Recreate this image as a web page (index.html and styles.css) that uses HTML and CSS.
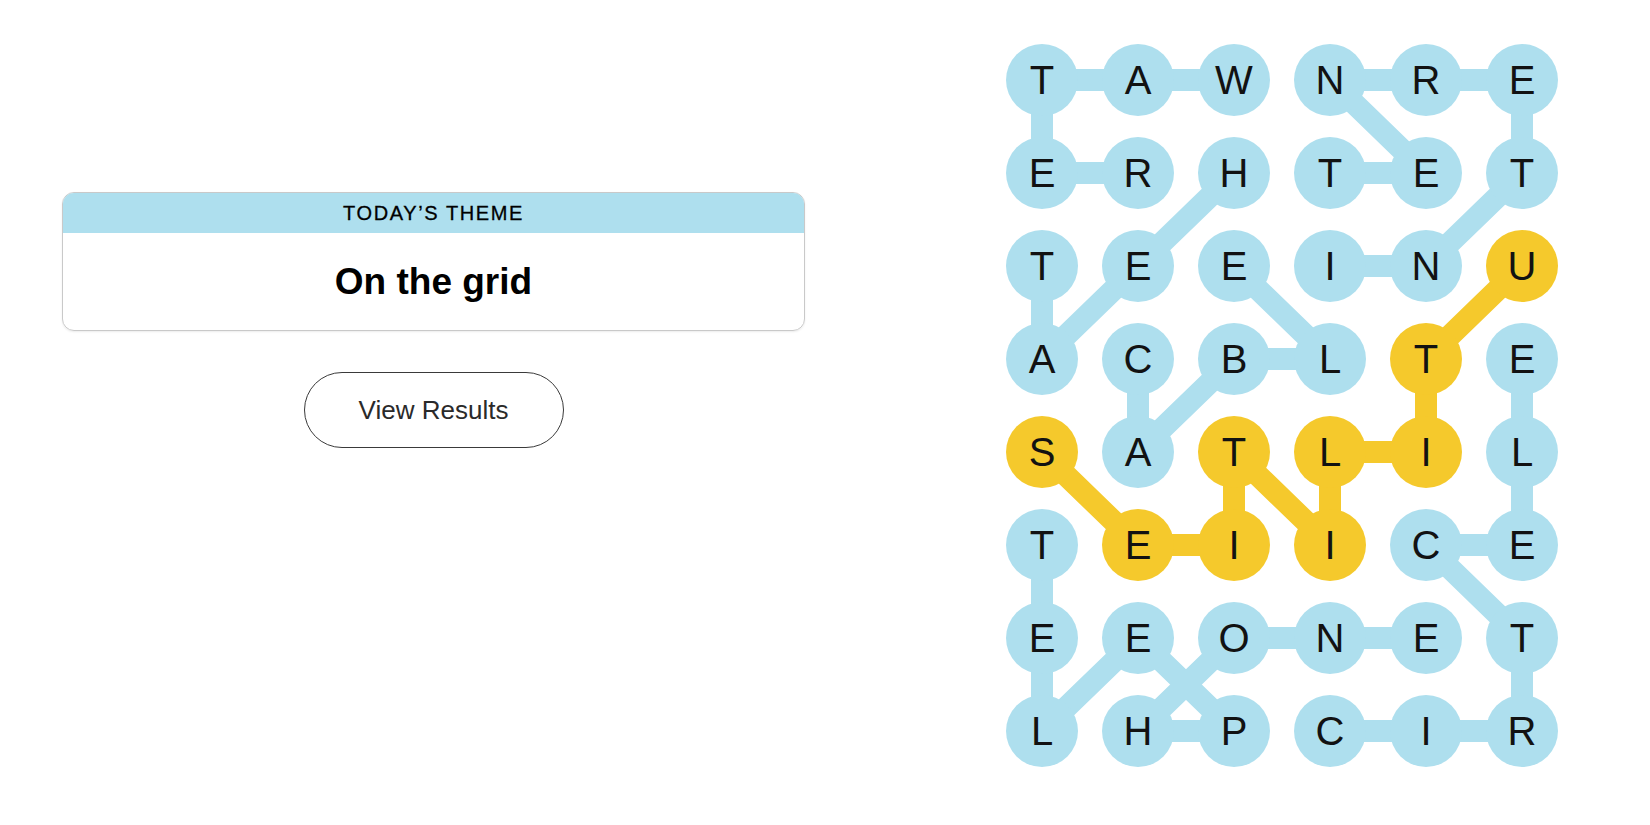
FILE: index.html
```html
<!DOCTYPE html>
<html lang="en">
<head>
<meta charset="utf-8">
<title>Strands</title>
<link rel="stylesheet" href="styles.css">
</head>
<body>
<main class="page">
  <section class="side">
    <div class="theme-card">
      <div class="theme-label">TODAY’S THEME</div>
      <div class="theme-body"><h1 class="theme-title">On the grid</h1></div>
    </div>
    <button class="results-btn" type="button">View Results</button>
  </section>

  <section class="board">
    <svg class="links" width="552" height="723" viewBox="0 0 552 723" aria-hidden="true">
      <g class="found" fill="none">
        <polyline points="228,36 132,36 36,36 36,129 132,129"/>
        <polyline points="228,129 132,222 36,315 36,222"/>
        <polyline points="324,222 420,222 516,129 516,36 420,36 324,36 420,129 324,129"/>
        <polyline points="132,315 132,408 228,315 324,315 228,222"/>
        <polyline points="516,315 516,408 516,501 420,501 516,594 516,687 420,687 324,687"/>
        <polyline points="36,501 36,594 36,687 132,594 228,687 132,687 228,594 324,594 420,594"/>
      </g>
      <g class="span" fill="none">
        <polyline points="516,222 420,315 420,408 324,408 324,501 228,408 228,501 132,501 36,408"/>
      </g>
    </svg>
    <div class="grid">
      <span class="cell">T</span><span class="cell">A</span><span class="cell">W</span><span class="cell">N</span><span class="cell">R</span><span class="cell">E</span>
      <span class="cell">E</span><span class="cell">R</span><span class="cell">H</span><span class="cell">T</span><span class="cell">E</span><span class="cell">T</span>
      <span class="cell">T</span><span class="cell">E</span><span class="cell">E</span><span class="cell">I</span><span class="cell">N</span><span class="cell gold">U</span>
      <span class="cell">A</span><span class="cell">C</span><span class="cell">B</span><span class="cell">L</span><span class="cell gold">T</span><span class="cell">E</span>
      <span class="cell gold">S</span><span class="cell">A</span><span class="cell gold">T</span><span class="cell gold">L</span><span class="cell gold">I</span><span class="cell">L</span>
      <span class="cell">T</span><span class="cell gold">E</span><span class="cell gold">I</span><span class="cell gold">I</span><span class="cell">C</span><span class="cell">E</span>
      <span class="cell">E</span><span class="cell">E</span><span class="cell">O</span><span class="cell">N</span><span class="cell">E</span><span class="cell">T</span>
      <span class="cell">L</span><span class="cell">H</span><span class="cell">P</span><span class="cell">C</span><span class="cell">I</span><span class="cell">R</span>
    </div>
  </section>
</main>
</body>
</html>
```

FILE: styles.css
```css
* { box-sizing: border-box; }

html, body {
  margin: 0;
  background: #ffffff;
  color: #121212;
  font-family: "Liberation Sans", Arial, sans-serif;
}

.page {
  display: flex;
  align-items: flex-start;
  padding: 44px 0 0 62px;
  column-gap: 201px;
}

.side {
  width: 743px;
  margin-top: 148px;
  display: flex;
  flex-direction: column;
  align-items: center;
}

.theme-card {
  width: 100%;
  border: 1px solid #c9c9c9;
  border-radius: 12px;
  overflow: hidden;
  box-shadow: 0 1px 2px rgba(0, 0, 0, 0.08);
}

.theme-label {
  height: 40px;
  background: #aedfee;
  display: flex;
  align-items: center;
  justify-content: center;
  font-size: 20px;
  letter-spacing: 1.6px;
  color: #000;
  -webkit-text-stroke: 0.3px #000;
}

.theme-body {
  height: 97px;
  display: flex;
  align-items: center;
  justify-content: center;
}

.theme-title {
  margin: 0;
  font-size: 37px;
  font-weight: 700;
  color: #000;
}

.results-btn {
  margin-top: 41px;
  width: 260px;
  height: 76px;
  border: 1px solid #3a3a3a;
  border-radius: 38px;
  background: #fff;
  color: #2a2a2a;
  font-family: "Liberation Sans", Arial, sans-serif;
  font-size: 26px;
  cursor: pointer;
}

.board {
  position: relative;
  width: 552px;
  height: 723px;
}

.links {
  position: absolute;
  left: 0;
  top: 0;
}

.found polyline {
  stroke: #aedfee;
  stroke-width: 22;
}

.span polyline {
  stroke: #f5c92c;
  stroke-width: 22;
}

.grid {
  position: relative;
  display: grid;
  grid-template-columns: repeat(6, 72px);
  grid-template-rows: repeat(8, 72px);
  column-gap: 24px;
  row-gap: 21px;
}

.cell {
  width: 72px;
  height: 72px;
  border-radius: 50%;
  background: #aedfee;
  display: flex;
  align-items: center;
  justify-content: center;
  font-size: 40px;
  line-height: 1;
  color: #121212;
}

.cell.gold {
  background: #f5c92c;
}
```
